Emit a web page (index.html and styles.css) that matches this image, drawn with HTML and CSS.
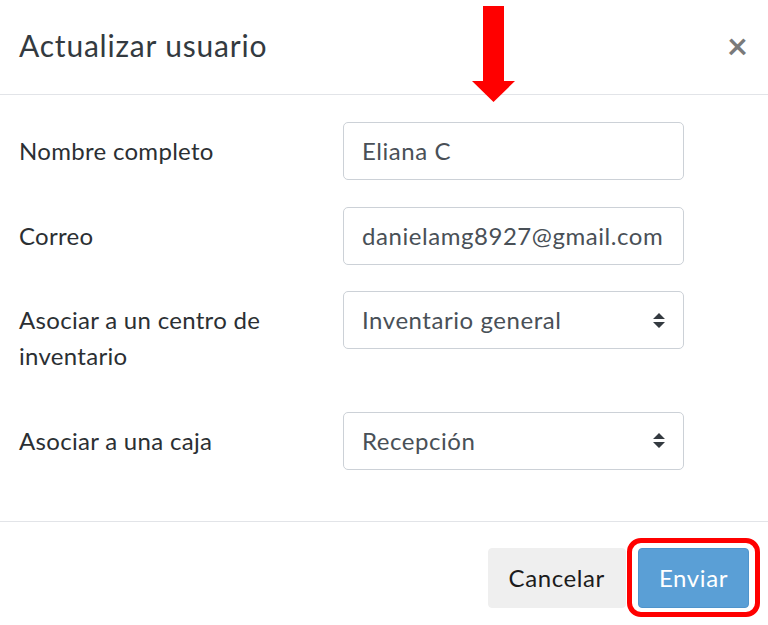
FILE: index.html
```html
<!DOCTYPE html>
<html lang="es">
<head>
<meta charset="utf-8">
<title>Actualizar usuario</title>
<link rel="stylesheet" href="styles.css">
</head>
<body>
<div class="modal">
  <div class="modal-header">
    <h5 class="modal-title">Actualizar usuario</h5>
    <span class="close" aria-label="Cerrar">×</span>
    <svg class="annot-arrow" width="44" height="96" viewBox="0 0 44 96" aria-hidden="true">
      <path d="M11 0H32V75H43L21.5 96L0 75H11Z" fill="#ff0000"/>
    </svg>
  </div>
  <div class="modal-body">
    <div class="form-row">
      <label class="form-label">Nombre completo</label>
      <div class="form-control">Eliana C</div>
    </div>
    <div class="form-row">
      <label class="form-label">Correo</label>
      <div class="form-control">danielamg8927@gmail.com</div>
    </div>
    <div class="form-row">
      <label class="form-label">Asociar a un centro de inventario</label>
      <div class="form-control select">
        <span>Inventario general</span>
        <svg class="select-arrows" width="12" height="15" viewBox="0 0 4 5" aria-hidden="true"><path d="M2 0L0 2h4zm0 5L0 3h4z" fill="#343a40"/></svg>
      </div>
    </div>
    <div class="form-row">
      <label class="form-label">Asociar a una caja</label>
      <div class="form-control select">
        <span>Recepción</span>
        <svg class="select-arrows" width="12" height="15" viewBox="0 0 4 5" aria-hidden="true"><path d="M2 0L0 2h4zm0 5L0 3h4z" fill="#343a40"/></svg>
      </div>
    </div>
  </div>
  <div class="modal-footer">
    <button class="btn btn-light" type="button">Cancelar</button>
    <span class="highlight"><button class="btn btn-primary" type="button">Enviar</button></span>
  </div>
</div>
</body>
</html>
```
FILE: styles.css
```css
* { box-sizing: border-box; }

html, body {
  margin: 0;
  padding: 0;
  background: #ffffff;
}

body {
  font-family: Lato, "Open Sans", "Liberation Sans", sans-serif;
  color: #212529;
  font-size: 24px;
  line-height: 36px;
  letter-spacing: 0.55px;
}

.modal {
  width: 768px;
  background: #ffffff;
}

.modal-header {
  position: relative;
  display: flex;
  justify-content: space-between;
  align-items: flex-start;
  padding: 23px 19px 26px 19px;
  border-bottom: 1px solid #e2e4e8;
}

.modal-title {
  margin: 0;
  font-size: 30px;
  line-height: 45px;
  font-weight: 400;
  color: #333a40;
  letter-spacing: 0.8px;
}

.close {
  font-size: 36px;
  line-height: 45px;
  font-weight: 700;
  color: #7a7a7a;
  padding-right: 1px;
  letter-spacing: 0;
}

.annot-arrow {
  position: absolute;
  left: 472px;
  top: 6px;
}

.modal-body {
  display: flex;
  flex-direction: column;
  gap: 25.5px;
  padding: 27px 19px 50px 19px;
}

.form-row {
  display: grid;
  grid-template-columns: 324px 341px;
  align-items: start;
}

.form-label {
  padding: 11px 0 12px 0;
  line-height: 36px;
  color: #2b2f33;
  letter-spacing: 0.3px;
}

.form-control {
  height: 58px;
  padding: 0 18px;
  border: 1px solid #ccd1d7;
  border-radius: 5px;
  display: flex;
  align-items: center;
  color: #495057;
  white-space: nowrap;
  overflow: hidden;
}

.select {
  justify-content: space-between;
}

.select-arrows {
  flex: none;
}

.modal-footer {
  display: flex;
  justify-content: flex-end;
  align-items: center;
  gap: 12px;
  padding: 26px 19px 18px 19px;
  border-top: 1px solid #e2e4e8;
}

.btn {
  font-family: inherit;
  font-size: 24px;
  line-height: 36px;
  letter-spacing: 0.6px;
  padding: 11px 20px;
  border: 1px solid transparent;
  border-radius: 4px;
  margin: 0;
}

.btn-light {
  background: #efefef;
  color: #1c1c1c;
  border-color: #efefef;
}

.btn-primary {
  background: #5a9fd6;
  color: #ffffff;
  border-color: #4f94cc;
}

.highlight {
  position: relative;
  display: inline-flex;
}

.highlight::after {
  content: "";
  position: absolute;
  left: -11px;
  right: -11px;
  top: -10px;
  bottom: -9px;
  border: 5px solid #ff0000;
  border-radius: 14px;
  pointer-events: none;
}
```
